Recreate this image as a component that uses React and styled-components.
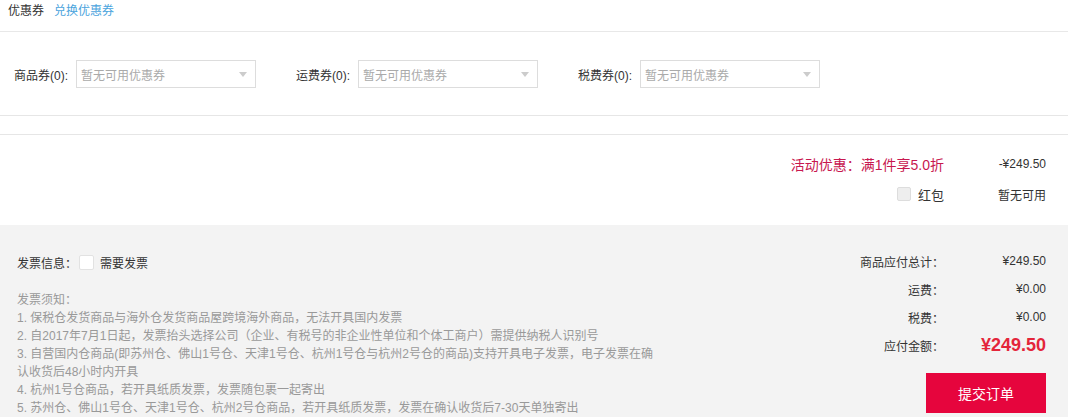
import React from 'react';
import styled, { createGlobalStyle } from 'styled-components';

const Global = createGlobalStyle`
  html, body { margin: 0; padding: 0; background: #fff; }
  body {
    font-family: "Liberation Sans", Arial, "Noto Sans CJK SC", sans-serif;
    font-size: 12px;
    color: #333;
  }
  * { box-sizing: border-box; }
`;

const Page = styled.div`
  width: 1068px;
  height: 417px;
  overflow: hidden;
  display: flex;
  flex-direction: column;
`;

const Header = styled.div`
  display: flex;
  align-items: center;
  gap: 10px;
  height: 32px;
  padding: 0 8px 9px;
  border-bottom: 1px solid #e8e8e8;
  line-height: 22px;
`;

const Title = styled.span`
  color: #333;
`;

const Link = styled.a`
  color: #4ba4dd;
  text-decoration: none;
`;

const CouponRow = styled.div`
  display: flex;
  padding: 28px 0 27px 14px;
  border-bottom: 1px solid #e6e6e6;
`;

const CouponGroup = styled.div`
  display: flex;
  align-items: center;
  width: 282px;
`;

const CouponLabel = styled.span`
  width: 62px;
  color: #333;
`;

const Select = styled.div`
  display: flex;
  align-items: center;
  width: 180px;
  height: 28px;
  border: 1px solid #ddd;
  background: #fff;
  padding: 0 8px 0 4px;
  color: #aaa;
`;

const Placeholder = styled.span`
  flex: 1;
`;

const Arrow = styled.span`
  width: 0;
  height: 0;
  border-left: 4px solid transparent;
  border-right: 4px solid transparent;
  border-top: 5px solid #ccc;
`;

const Spacer = styled.div`
  height: 21px;
  border-bottom: 1px solid #e6e6e6;
`;

const Discounts = styled.div`
  display: flex;
  flex-direction: column;
  padding: 14px 22px 16px 0;
`;

const SumRow = styled.div`
  display: flex;
  justify-content: flex-end;
  align-items: center;
  height: ${p => p.$h || 28}px;
`;

const SumLabel = styled.span`
  display: flex;
  align-items: center;
  color: ${p => p.$color || '#333'};
  font-size: ${p => p.$size || 12}px;
`;

const SumValue = styled.span`
  width: 102px;
  text-align: right;
  color: ${p => p.$color || '#333'};
  font-size: ${p => p.$size || 12}px;
  font-weight: ${p => (p.$bold ? 700 : 400)};
`;

const Check = styled.span`
  display: inline-block;
  width: ${p => p.$s || 14}px;
  height: ${p => p.$s || 14}px;
  background: ${p => p.$bg || '#fff'};
  border: 1px solid ${p => p.$bd || '#ddd'};
  border-radius: 2px;
  margin-right: ${p => p.$mr || 6}px;
  margin-left: ${p => p.$ml || 0}px;
`;

const Bottom = styled.div`
  flex: 1;
  background: #f3f3f3;
  display: flex;
  justify-content: space-between;
  padding: 22px 22px 0 17px;
`;

const Left = styled.div`
  width: 641px;
  padding-top: 5px;
`;

const InvoiceRow = styled.div`
  display: flex;
  align-items: center;
  height: 20px;
  color: #333;
`;

const Notice = styled.div`
  margin-top: 19px;
  line-height: 18px;
  color: #999;
`;

const Right = styled.div`
  width: 200px;
  display: flex;
  flex-direction: column;
`;

const SubmitButton = styled.button`
  align-self: flex-end;
  width: 120px;
  height: 40px;
  margin-top: 14px;
  border: none;
  background: #e6053d;
  color: #fff;
  font-family: inherit;
  font-size: 14px;
  cursor: pointer;
`;

const coupons = ['商品券(0):', '运费券(0):', '税费券(0):'];

const notices = [
  '发票须知：',
  '1. 保税仓发货商品与海外仓发货商品屋跨境海外商品，无法开具国内发票',
  '2. 自2017年7月1日起，发票抬头选择公司（企业、有税号的非企业性单位和个体工商户）需提供纳税人识别号',
  '3. 自营国内仓商品(即苏州仓、佛山1号仓、天津1号仓、杭州1号仓与杭州2号仓的商品)支持开具电子发票，电子发票在确认收货后48小时内开具',
  '4. 杭州1号仓商品，若开具纸质发票，发票随包裹一起寄出',
  '5. 苏州仓、佛山1号仓、天津1号仓、杭州2号仓商品，若开具纸质发票，发票在确认收货后7-30天单独寄出',
];

export default function App() {
  return (
    <>
      <Global />
      <Page>
        <Header>
          <Title>优惠券</Title>
          <Link href="#">兑换优惠券</Link>
        </Header>
        <CouponRow>
          {coupons.map(c => (
            <CouponGroup key={c}>
              <CouponLabel>{c}</CouponLabel>
              <Select>
                <Placeholder>暂无可用优惠券</Placeholder>
                <Arrow />
              </Select>
            </CouponGroup>
          ))}
        </CouponRow>
        <Spacer />
        <Discounts>
          <SumRow $h={30}>
            <SumLabel $color="#c8184f" $size={14}>活动优惠：满1件享5.0折</SumLabel>
            <SumValue>-¥249.50</SumValue>
          </SumRow>
          <SumRow $h={30}>
            <SumLabel $size={13}>
              <Check $bg="#eee" $bd="#ddd" $mr={7} />
              红包
            </SumLabel>
            <SumValue>暂无可用</SumValue>
          </SumRow>
        </Discounts>
        <Bottom>
          <Left>
            <InvoiceRow>
              发票信息：
              <Check $s={15} $ml={2} $mr={6} $bd="#e2e2e2" />
              需要发票
            </InvoiceRow>
            <Notice>
              {notices.map(n => (
                <div key={n}>{n}</div>
              ))}
            </Notice>
          </Left>
          <Right>
            <SumRow>
              <SumLabel>商品应付总计：</SumLabel>
              <SumValue>¥249.50</SumValue>
            </SumRow>
            <SumRow>
              <SumLabel>运费：</SumLabel>
              <SumValue>¥0.00</SumValue>
            </SumRow>
            <SumRow>
              <SumLabel>税费：</SumLabel>
              <SumValue>¥0.00</SumValue>
            </SumRow>
            <SumRow>
              <SumLabel>应付金额：</SumLabel>
              <SumValue $color="#e4253a" $size={18} $bold>¥249.50</SumValue>
            </SumRow>
            <SubmitButton>提交订单</SubmitButton>
          </Right>
        </Bottom>
      </Page>
    </>
  );
}
